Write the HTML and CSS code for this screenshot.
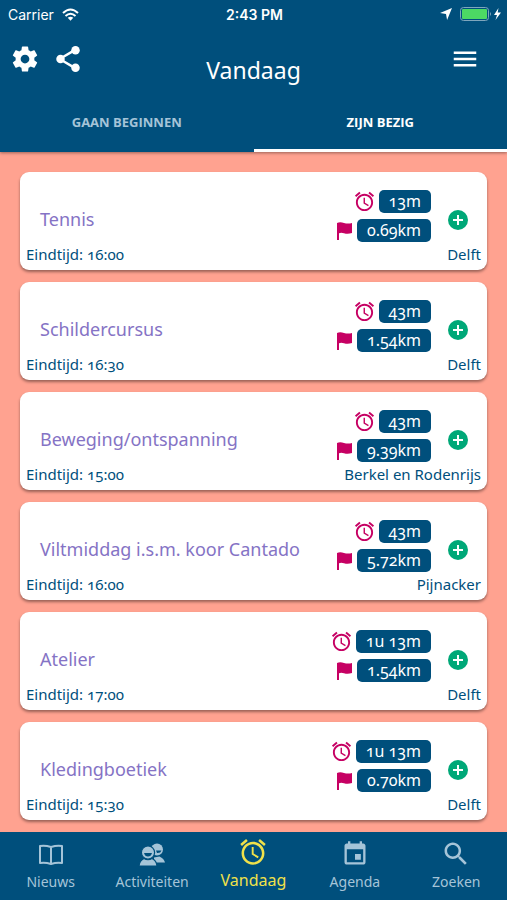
FILE: index.html
```html
<!DOCTYPE html>
<html lang="nl">
<head>
  <meta charset="UTF-8" />
  <title>Vandaag</title>
  <meta name="viewport" content="width=device-width, initial-scale=1.0" />
  <link rel="stylesheet" href="styles.css">
</head>
<body>

<!-- shared icons -->
<svg class="sprite" aria-hidden="true">
  <symbol id="alarm" viewBox="1 1 22 22"><path d="M22 5.720l-4.600-3.860-1.290 1.530 4.600 3.860L22 5.720zM7.880 3.390L6.600 1.860 2 5.710l1.290 1.530 4.590-3.850zM12.500 8H11v6l4.750 2.850.75-1.230-4-2.370V8zM12 4c-4.970 0-9 4.030-9 9s4.020 9 9 9c4.970 0 9-4.030 9-9s-4.030-9-9-9zm0 16c-3.870 0-7-3.130-7-7s3.130-7 7-7 7 3.130 7 7-3.130 7-7 7z"/></symbol>
  <symbol id="flag" viewBox="0 0 17 20"><path d="M1 2q3-1.300 7 0 4 1.200 8 0v10q-4 1.500-8 .3-3-1-5 0V19H1z"/></symbol>
  <symbol id="plus" viewBox="0 0 20 20"><circle cx="10" cy="10" r="10"/><path class="plus-sign" d="M10 5v10M5 10h10"/></symbol>
</svg>

<header>
  <div class="status">
    <span class="carrier">Carrier
      <svg class="outline" width="17" height="13" viewBox="0 0 17 13"><path d="M1 5Q8.500-2 16 5M3.500 8q5-4.500 10 0"/><path class="solid" d="M5.700 9.800q2.800-2.300 5.600 0L8.500 12.800z"/></svg>
    </span>
    <span class="clock">2:43 PM</span>
    <span class="power">
      <svg width="12" height="12" viewBox="0 0 11 11"><path d="M11 0L6.500 11 5.500 5.500 0 4.500z"/></svg>
      <svg width="41" height="15" viewBox="0 0 41 15"><rect class="battery" x=".5" y=".5" width="28" height="13" rx="3"/><rect class="charge" x="2" y="2" width="25" height="10" rx="1"/><path class="tip" d="M30 5q2 2 0 4z"/><path d="M38.500 1L34 8h3L35.500 13l5.500-7.500h-3.300z"/></svg>
    </span>
  </div>

  <div class="toolbar">
    <div class="tools">
      <button aria-label="Instellingen">
        <svg width="30" height="30" viewBox="0 0 24 24"><path d="M19.430 12.980c.04-.32.07-.64.07-.98s-.03-.66-.07-.98l2.110-1.650c.19-.15.24-.42.12-.64l-2-3.460c-.12-.22-.39-.3-.61-.22l-2.490 1c-.52-.4-1.080-.73-1.690-.98l-.38-2.650C14.460 2.180 14.250 2 14 2h-4c-.25 0-.46.18-.49.42l-.38 2.650c-.61.25-1.170.59-1.690.98l-2.490-1c-.23-.09-.49 0-.61.22l-2 3.460c-.13.22-.07.49.12.64l2.110 1.650c-.04.32-.07.65-.07.98s.03.66.07.98l-2.110 1.650c-.19.15-.24.42-.12.64l2 3.460c.12.22.39.3.61.22l2.490-1c.52.4 1.080.73 1.690.98l.38 2.650c.03.24.24.42.49.42h4c.25 0 .46-.18.49-.42l.38-2.650c.61-.25 1.170-.59 1.690-.98l2.490 1c.23.09.49 0 .61-.22l2-3.460c.12-.22.07-.49-.12-.64l-2.110-1.650zM12 15.500c-1.930 0-3.500-1.570-3.500-3.500s1.570-3.500 3.500-3.500 3.500 1.570 3.500 3.500-1.570 3.500-3.500 3.500z"/></svg>
      </button>
      <button aria-label="Delen">
        <svg width="30" height="30" viewBox="0 0 24 24"><path d="M7 11l9-5.300M7 13l9 5.300" stroke="currentColor" stroke-width="1.900"/><circle cx="6" cy="12" r="3.400"/><circle cx="18" cy="5" r="3.400"/><circle cx="18" cy="19" r="3.400"/></svg>
      </button>
    </div>
    <h1>Vandaag</h1>
    <button class="menu" aria-label="Menu">
      <svg width="30" height="30" viewBox="0 0 24 24"><path d="M3 18h18v-2H3v2zm0-5h18v-2H3v2zm0-7v2h18V6H3z"/></svg>
    </button>
  </div>

  <nav class="tabs">
    <button>GAAN BEGINNEN</button>
    <button class="active">ZIJN BEZIG</button>
  </nav>
</header>

<main>
  <article class="card">
    <div class="card-top">
      <h2>Tennis</h2>
      <div class="badges">
        <div><svg class="alarm"><use href="#alarm"/></svg><span class="badge">13m</span></div>
        <div><svg class="flag"><use href="#flag"/></svg><span class="badge">0.69km</span></div>
      </div>
      <button class="add" aria-label="Toevoegen"><svg><use href="#plus"/></svg></button>
    </div>
    <div class="card-bottom"><span>Eindtijd: 16:00</span><span>Delft</span></div>
  </article>

  <article class="card">
    <div class="card-top">
      <h2>Schildercursus</h2>
      <div class="badges">
        <div><svg class="alarm"><use href="#alarm"/></svg><span class="badge">43m</span></div>
        <div><svg class="flag"><use href="#flag"/></svg><span class="badge">1.54km</span></div>
      </div>
      <button class="add" aria-label="Toevoegen"><svg><use href="#plus"/></svg></button>
    </div>
    <div class="card-bottom"><span>Eindtijd: 16:30</span><span>Delft</span></div>
  </article>

  <article class="card">
    <div class="card-top">
      <h2>Beweging/ontspanning</h2>
      <div class="badges">
        <div><svg class="alarm"><use href="#alarm"/></svg><span class="badge">43m</span></div>
        <div><svg class="flag"><use href="#flag"/></svg><span class="badge">9.39km</span></div>
      </div>
      <button class="add" aria-label="Toevoegen"><svg><use href="#plus"/></svg></button>
    </div>
    <div class="card-bottom"><span>Eindtijd: 15:00</span><span>Berkel en Rodenrijs</span></div>
  </article>

  <article class="card">
    <div class="card-top">
      <h2>Viltmiddag i.s.m. koor Cantado</h2>
      <div class="badges">
        <div><svg class="alarm"><use href="#alarm"/></svg><span class="badge">43m</span></div>
        <div><svg class="flag"><use href="#flag"/></svg><span class="badge">5.72km</span></div>
      </div>
      <button class="add" aria-label="Toevoegen"><svg><use href="#plus"/></svg></button>
    </div>
    <div class="card-bottom"><span>Eindtijd: 16:00</span><span>Pijnacker</span></div>
  </article>

  <article class="card">
    <div class="card-top">
      <h2>Atelier</h2>
      <div class="badges">
        <div><svg class="alarm"><use href="#alarm"/></svg><span class="badge">1u 13m</span></div>
        <div><svg class="flag"><use href="#flag"/></svg><span class="badge">1.54km</span></div>
      </div>
      <button class="add" aria-label="Toevoegen"><svg><use href="#plus"/></svg></button>
    </div>
    <div class="card-bottom"><span>Eindtijd: 17:00</span><span>Delft</span></div>
  </article>

  <article class="card">
    <div class="card-top">
      <h2>Kledingboetiek</h2>
      <div class="badges">
        <div><svg class="alarm"><use href="#alarm"/></svg><span class="badge">1u 13m</span></div>
        <div><svg class="flag"><use href="#flag"/></svg><span class="badge">0.70km</span></div>
      </div>
      <button class="add" aria-label="Toevoegen"><svg><use href="#plus"/></svg></button>
    </div>
    <div class="card-bottom"><span>Eindtijd: 15:30</span><span>Delft</span></div>
  </article>
</main>

<footer>
  <a href="#nieuws">
    <svg class="outline" viewBox="0 0 28 28"><path d="M14 7Q8 5 3 6v17q5-1 11 1 6-2 11-1V6q-5-1-11 1zm0 0v17"/></svg>
    Nieuws
  </a>
  <a href="#activiteiten">
    <svg viewBox="0 0 28 28"><circle cx="19" cy="9.500" r="6"/><path d="M16 22.500h11q-1-4-5.500-6l-5.500 1z"/><g stroke="#004f7c" stroke-width="1.200"><circle cx="10" cy="12.500" r="6.600"/><path d="M1 26q.5-5.500 5-7.500 4 2.500 8 0 4.500 2 5 7.500z"/></g><path d="M6 13h8q-1 3.500-4 3.500T6 13M18 10.500h5.500q-.8 2.800-4.500 2.500z" fill="#004f7c"/></svg>
    Activiteiten
  </a>
  <a href="#vandaag" class="active">
    <svg><use href="#alarm"/></svg>
    Vandaag
  </a>
  <a href="#agenda">
    <svg viewBox="0 0 24 24"><path d="M17 12h-5v5h5v-5zM16 1v2H8V1H6v2H5c-1.110 0-1.990.9-1.990 2L3 19c0 1.100.89 2 2 2h14c1.100 0 2-.9 2-2V5c0-1.100-.9-2-2-2h-1V1h-2zm3 18H5V8h14v11z"/></svg>
    Agenda
  </a>
  <a href="#zoeken">
    <svg viewBox="1 1 22 22"><path d="M15.500 14h-.79l-.28-.27C15.410 12.590 16 11.110 16 9.500 16 5.910 13.090 3 9.500 3S3 5.910 3 9.500 5.910 16 9.500 16c1.610 0 3.090-.59 4.230-1.570l.27.28v.79l5 4.990L20.490 19l-4.990-5zm-6 0C7.010 14 5 11.990 5 9.500S7.010 5 9.500 5 14 7.010 14 9.500 11.990 14 9.500 14z"/></svg>
    Zoeken
  </a>
</footer>

</body>
</html>
```
FILE: styles.css
```css
* {
  box-sizing: border-box;
}

body {
  margin: 0;
  height: 100vh;
  display: flex;
  flex-direction: column;
  font-family: "Noto Sans", "Open Sans", sans-serif;
  font-variant-numeric: oldstyle-nums;
  background-color: #ffa290;
  color: #004f7c;
}

button {
  background: none;
  border: none;
  padding: 0;
  font: inherit;
  color: inherit;
  cursor: pointer;
}

svg {
  display: block;
  fill: currentColor;
}

.outline {
  fill: none;
  stroke: currentColor;
  stroke-width: 2;
  stroke-linejoin: round;
}

.solid {
  fill: currentColor;
  stroke: none;
}

.sprite {
  position: absolute;
  width: 0;
  height: 0;
}

header {
  background-color: #004f7c;
  color: white;
  box-shadow: 0 1px 3px rgba(0,0,0,0.4);
  z-index: 1;
}

.status {
  display: grid;
  grid-template-columns: 1fr auto 1fr;
  align-items: center;
  height: 28px;
  padding: 0 6px 0 8px;
  font-family: Inter, sans-serif;
  font-size: 14px;
  font-variant-numeric: normal;
}

.carrier, .power {
  display: flex;
  align-items: center;
  gap: 8px;
}

.clock {
  font-weight: 600;
}

.power {
  justify-content: flex-end;
}

.battery {
  fill: none;
  stroke: #7fa6bd;
}

.charge {
  fill: #4cd964;
}

.tip {
  fill: #7fa6bd;
}

.toolbar {
  display: grid;
  grid-template-columns: 1fr auto 1fr;
  align-items: start;
  height: 64px;
  padding: 16px 10px 0;
}

.tools {
  display: flex;
  gap: 13px;
}

.menu {
  justify-self: end;
  margin-right: 17px;
}

h1 {
  margin: 10px 0 0;
  font-size: 23px;
  font-weight: 400;
  line-height: 32px;
}

.tabs {
  display: grid;
  grid-template-columns: 1fr 1fr;
}

.tabs button {
  height: 60px;
  padding-top: 2px;
  border-bottom: 3px solid transparent;
  font-family: "Open Sans", sans-serif;
  font-size: 13px;
  font-weight: 700;
  color: #a5c4d8;
}

.tabs .active {
  color: white;
  border-color: white;
}

main {
  flex: 1;
  min-height: 0;
  overflow: hidden;
  padding: 20px;
  display: flex;
  flex-direction: column;
  gap: 12px;
}

.card {
  flex: none;
  background-color: white;
  border-radius: 9px;
  padding: 18px 6px 6px;
  box-shadow: 0 2px 3px rgba(0,0,0,0.4);
}

.card-top {
  display: flex;
  align-items: center;
  padding: 0 13px 0 14px;
}

h2 {
  flex: 1;
  margin: 0;
  padding-top: 6px;
  font-size: 18px;
  font-weight: 400;
  color: #8573c5;
}

.badges {
  display: flex;
  flex-direction: column;
  gap: 6px;
}

.badges div {
  display: flex;
  justify-content: flex-end;
  align-items: center;
  gap: 4px;
  color: #c60063;
}

.badge {
  background-color: #004f7c;
  color: white;
  border-radius: 5px;
  padding: 0 10px;
  font-size: 16px;
  font-weight: 400;
  line-height: 23px;
}

.alarm {
  width: 21px;
  height: 21px;
}

.flag {
  width: 17px;
  height: 20px;
}

.add {
  margin-left: 17px;
  padding-top: 7px;
  color: #00a878;
}

.add svg {
  width: 20px;
  height: 20px;
}

.plus-sign {
  stroke: white;
  stroke-width: 2;
}

.card-bottom {
  display: flex;
  justify-content: space-between;
  padding-top: 2px;
  font-size: 15px;
  line-height: 20px;
}

footer {
  display: grid;
  grid-template-columns: repeat(5, 1fr);
  height: 68px;
  background-color: #004f7c;
  z-index: 1;
}

footer a {
  display: flex;
  flex-direction: column;
  align-items: center;
  gap: 4px;
  padding-top: 8px;
  color: #a5c4d8;
  font-size: 14px;
  line-height: 20px;
  text-decoration: none;
}

footer svg {
  width: 28px;
  height: 28px;
}

footer .active {
  padding-top: 6px;
  color: #f0e14a;
  font-size: 16px;
}
```
